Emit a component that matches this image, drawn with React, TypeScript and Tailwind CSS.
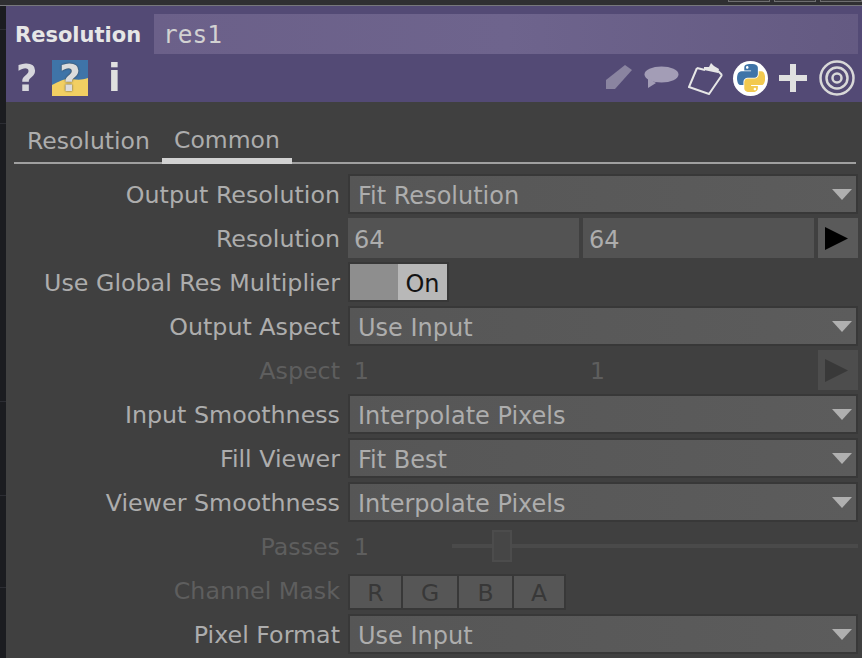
import React from 'react';

const FONT = "font-['DejaVu_Sans',sans-serif]";

function PythonLogo({ size }: { size: number }) {
    return (
        <svg width={size} height={size} viewBox="0 0 110.4 110.4">
            <path fill="#3f74a8" fillRule="evenodd" d="M54.919.001c-4.584.022-8.961.413-12.812 1.095C30.76 3.099 28.7 7.295 28.7 15.032V25.25h26.813v3.406H18.638c-7.793 0-14.616 4.684-16.75 13.594-2.462 10.213-2.571 16.586 0 27.25 1.906 7.938 6.457 13.594 14.25 13.594h9.219V70.844c0-8.85 7.657-16.656 16.75-16.656h26.781c7.455 0 13.406-6.138 13.406-13.625V15.032c0-7.266-6.13-12.725-13.406-13.937C64.282.328 59.502-.02 54.919.001zm-14.5 8.219c2.77 0 5.031 2.299 5.031 5.125 0 2.816-2.262 5.094-5.031 5.094-2.78 0-5.031-2.277-5.031-5.094 0-2.826 2.252-5.125 5.031-5.125z" />
            <path fill="#f2c94f" fillRule="evenodd" d="M85.638 28.657v11.906c0 9.231-7.826 17-16.75 17H42.106c-7.336 0-13.406 6.279-13.406 13.625v25.531c0 7.266 6.319 11.54 13.406 13.625 8.487 2.496 16.626 2.947 26.781 0 6.75-1.954 13.406-5.888 13.406-13.625V86.5H55.513v-3.405H95.7c7.793 0 10.696-5.436 13.406-13.594 2.8-8.399 2.68-16.476 0-27.25-1.926-7.757-5.604-13.594-13.406-13.594zM70.575 93.313c2.78 0 5.031 2.277 5.031 5.094 0 2.826-2.252 5.125-5.031 5.125-2.77 0-5.031-2.299-5.031-5.125 0-2.816 2.262-5.094 5.031-5.094z" />
        </svg>
    );
}

function Row({ label, dim, children }: { label: string; dim?: boolean; children: React.ReactNode }) {
    return (
        <div className="flex h-[44px] items-center gap-[8px]">
            <div className={`w-[334px] shrink-0 pt-[4px] text-right text-[23.75px] ${dim ? 'text-[#5e5e5e]' : 'text-[#adadad]'}`}>
                {label}
            </div>
            {children}
        </div>
    );
}

function Dropdown({ value }: { value: string }) {
    return (
        <div className="flex h-[40px] w-[510px] items-center justify-between border-2 border-[#383838] bg-gradient-to-r from-[#565656] to-[#5c5c5c] pl-[8px] pr-[4px] text-[#adadad]">
            <span className="pt-[4px] text-[24px]">{value}</span>
            <svg width="20" height="11" viewBox="0 0 20 11">
                <path d="M0 0h20L10 11z" fill="#b0b0b0" />
            </svg>
        </div>
    );
}

function ArrowButton({ dim }: { dim?: boolean }) {
    return (
        <div className={`flex h-[40px] w-[40px] items-center pl-[7px] pt-[1px] ${dim ? 'bg-[#4d4d4d]' : 'bg-[#5a5a5a]'}`}>
            <svg width="23" height="23" viewBox="0 0 23 23">
                <path d="M0 0l23 11.5L0 23z" fill={dim ? '#393939' : '#000000'} />
            </svg>
        </div>
    );
}

function Channel({ name, width }: { name: string; width: string }) {
    return (
        <div className={`flex h-full items-center justify-center border-r-2 border-[#383838] bg-[#565656] pt-[3px] text-[#383838] last:border-r-0 ${width}`}>
            {name}
        </div>
    );
}

export default function App() {
    return (
        <div className={`flex h-[658px] w-[862px] flex-col overflow-hidden bg-[#1b1c20] text-[23.5px] leading-none ${FONT}`}>
            {/* strip above the panel */}
            <div className="flex h-[6px] shrink-0 justify-end gap-[4px] border-b border-[#77777c] bg-[#2f2f32]">
                <div className="h-[2px] w-[42px] border-x border-b border-[#6e6e70] bg-[#38383a]" />
                <div className="h-[2px] w-[42px] border-x border-b border-[#6e6e70] bg-[#38383a]" />
                <div className="h-[2px] w-[42px] border-x border-b border-[#6e6e70] bg-[#38383a]" />
            </div>

            <div className="flex min-h-0 flex-1">
                {/* network editor rows behind the panel */}
                <div className="flex w-[6px] shrink-0 flex-col">
                    <div className="h-[24px] border-b border-[#2c2d33]" />
                    <div className="h-[94px] border-b border-[#2c2d33]" />
                    <div className="h-[278px] border-b border-[#2c2d33]" />
                    <div className="h-[94px] border-b border-[#2c2d33]" />
                    <div className="h-[92px] border-b border-[#2c2d33]" />
                </div>

                <div className="flex min-w-0 flex-1 flex-col bg-[#404040]">
                    {/* header */}
                    <div className="flex h-[96px] shrink-0 flex-col bg-[#534a75] pl-[9px] pr-[4px] pt-[8px]">
                        <div className="flex h-[40px] items-center">
                            <div className="w-[139px] shrink-0 pt-[2px] text-[21px] font-bold text-[#e6e6e6]">Resolution</div>
                            <div className="flex h-full flex-1 items-center bg-gradient-to-r from-[#6b6089] via-[#6e648d] to-[#645a82] pl-[9px] pt-[2px] font-['DejaVu_Sans_Mono',monospace] text-[24.5px] text-[#d2d2d2]">
                                res1
                            </div>
                        </div>
                        <div className="flex h-[42px] items-center justify-between pt-[6px]">
                            <div className="flex items-center blur-[0.6px]">
                                <span className="w-[37px] pl-[1px] text-[37px] font-bold text-[#d6d6dc]">?</span>
                                <span className="relative flex h-[36px] w-[36px] items-center justify-center bg-[#3f74a8] text-[37px] font-bold text-[#dcdcdc] [text-shadow:0_0_2px_#333]">
                                    <svg width="36" height="36" viewBox="0 0 36 36" className="absolute left-0 top-0">
                                        <path d="M0 25c8-4 14-7 20-6s10 1 16-1v18H0z" fill="#f2cf62" />
                                    </svg>
                                    <span className="relative">?</span>
                                </span>
                                <span className="ml-[20px] text-[37px] font-bold text-[#e0e0e0]">i</span>
                            </div>
                            <div className="mr-[3px] flex items-center blur-[0.4px]">
                                {/* pencil */}
                                <svg width="28" height="26" viewBox="0 0 28 26" className="mr-[11px]">
                                    <path d="M1 15L20 0l7 5-17 19H1z" fill="#8a84a0" />
                                </svg>
                                {/* comment */}
                                <svg width="35" height="24" viewBox="0 0 35 24" className="mr-[9px]">
                                    <ellipse cx="17.5" cy="8.5" rx="17" ry="8" fill="#a39db6" />
                                    <path d="M4 12l8 5-8 5z" fill="#a39db6" />
                                </svg>
                                {/* clipboard */}
                                <svg width="36" height="33" viewBox="0 0 36 33" fill="none" className="mr-[9px]">
                                    <path d="M9 6L1 25l20 7L34 13" stroke="#e6e6e6" strokeWidth="2" />
                                    <path d="M9 6l8 2M30 9l4 4" stroke="#e6e6e6" strokeWidth="2" />
                                    <path d="M16 5l5 0 2-4 3 3 5 3-1 4-14-3z" fill="#e6e6e6" />
                                </svg>
                                {/* python */}
                                <div className="mr-[11px] flex h-[35px] w-[35px] items-center justify-center rounded-full bg-white">
                                    <PythonLogo size={28} />
                                </div>
                                {/* plus */}
                                <svg width="28" height="28" viewBox="0 0 28 28" className="mr-[12px]">
                                    <path d="M11 0h6v11h11v6H17v11h-6V17H0v-6h11z" fill="#e0e0e0" />
                                </svg>
                                {/* viewer */}
                                <svg width="36" height="36" viewBox="0 0 36 36" fill="none">
                                    <circle cx="18" cy="18" r="16.5" stroke="#d8d8d8" strokeWidth="2.5" />
                                    <circle cx="18" cy="18" r="10.5" stroke="#d8d8d8" strokeWidth="2.5" />
                                    <circle cx="18" cy="18" r="4.5" stroke="#d8d8d8" strokeWidth="2.5" />
                                </svg>
                            </div>
                        </div>
                    </div>

                    {/* tabs */}
                    <div className="mb-[8px] ml-[8px] mr-[6px] mt-[18px] flex h-[44px] shrink-0 items-end border-b-2 border-[#a0a0a0] text-[#adadad]">
                        <div className="flex h-[44px] w-[148px] items-center pl-[13px] pt-[4px]">Resolution</div>
                        <div className="mb-[-2px] flex h-[46px] w-[130px] items-center border-b-[6px] border-[#d2d2d2] pl-[12px] pt-[6px]">Common</div>
                    </div>

                    {/* parameters */}
                    <div className="flex flex-col">
                        <Row label="Output Resolution"><Dropdown value="Fit Resolution" /></Row>
                        <Row label="Resolution">
                            <div className="flex items-center gap-[4px] text-[24px] text-[#adadad]">
                                <div className="flex h-[40px] w-[231px] items-center bg-[#535353] pl-[6px] pt-[4px]">64</div>
                                <div className="flex h-[40px] w-[231px] items-center bg-[#535353] pl-[6px] pt-[4px]">64</div>
                                <ArrowButton />
                            </div>
                        </Row>
                        <Row label="Use Global Res Multiplier">
                            <div className="flex h-[40px] w-[101px] border-2 border-[#383838]">
                                <div className="w-[48px] bg-[#8e8e8e]" />
                                <div className="flex flex-1 items-center justify-center bg-[#b8b8b8] pt-[4px] text-[24px] text-[#141414]">On</div>
                            </div>
                        </Row>
                        <Row label="Output Aspect"><Dropdown value="Use Input" /></Row>
                        <Row label="Aspect" dim>
                            <div className="flex items-center gap-[4px] text-[#5e5e5e]">
                                <div className="w-[231px] pl-[6px] pt-[4px]">1</div>
                                <div className="w-[231px] pl-[7px] pt-[4px]">1</div>
                                <ArrowButton dim />
                            </div>
                        </Row>
                        <Row label="Input Smoothness"><Dropdown value="Interpolate Pixels" /></Row>
                        <Row label="Fill Viewer"><Dropdown value="Fit Best" /></Row>
                        <Row label="Viewer Smoothness"><Dropdown value="Interpolate Pixels" /></Row>
                        <Row label="Passes" dim>
                            <div className="flex w-[510px] items-center text-[#5e5e5e]">
                                <div className="w-[104px] pl-[6px] pt-[4px]">1</div>
                                <div className="relative h-[4px] flex-1 bg-[#4a4a4a]">
                                    <div className="absolute left-[40px] top-[-14px] h-[32px] w-[20px] border-2 border-[#4c4c4c] bg-[#464646]" />
                                </div>
                            </div>
                        </Row>
                        <Row label="Channel Mask" dim>
                            <div className="mt-[4px] flex h-[36px] border-2 border-[#383838]">
                                <Channel name="R" width="w-[53px]" />
                                <Channel name="G" width="w-[56px]" />
                                <Channel name="B" width="w-[55px]" />
                                <Channel name="A" width="w-[50px]" />
                            </div>
                        </Row>
                        <Row label="Pixel Format"><Dropdown value="Use Input" /></Row>
                    </div>
                </div>
            </div>
        </div>
    );
}
